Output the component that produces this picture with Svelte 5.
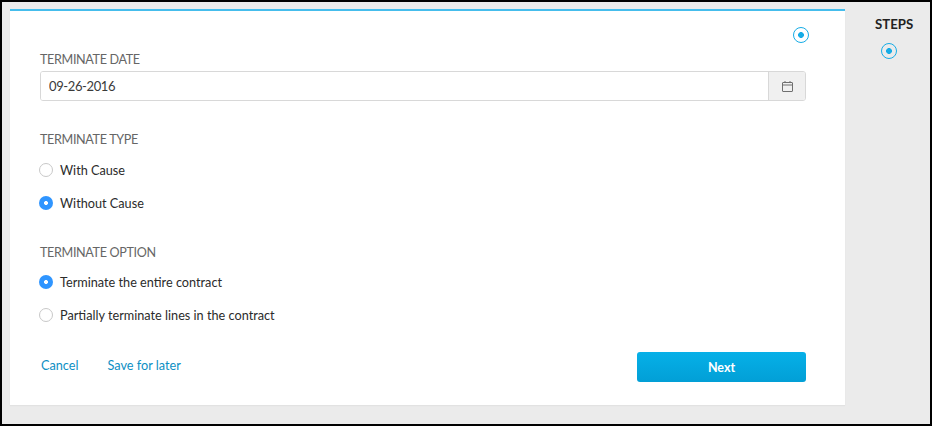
<script lang="ts">
	let terminateType = $state('without');
	let terminateOption = $state('entire');
</script>

<div class="frame">
	<main class="panel">
		<div class="current">
			<span class="step-dot"></span>
		</div>

		<label class="label first" for="date">TERMINATE DATE</label>
		<div class="date-field">
			<input id="date" value="09-26-2016" />
			<button class="cal" aria-label="Pick a date">
				<svg width="11" height="11" viewBox="0 0 11 11" fill="none" stroke="#6f6f6f" stroke-width="1">
					<rect x="0.5" y="1.5" width="10" height="9" rx="0.5" />
					<path d="M0.5 4h10M3 0v2M8 0v2" />
				</svg>
			</button>
		</div>

		<div class="label type-label">TERMINATE TYPE</div>
		<label class="radio">
			<input type="radio" bind:group={terminateType} value="with" />
			<span>With Cause</span>
		</label>
		<label class="radio">
			<input type="radio" bind:group={terminateType} value="without" />
			<span>Without Cause</span>
		</label>

		<div class="label option-label">TERMINATE OPTION</div>
		<label class="radio">
			<input type="radio" bind:group={terminateOption} value="entire" />
			<span>Terminate the entire contract</span>
		</label>
		<label class="radio">
			<input type="radio" bind:group={terminateOption} value="partial" />
			<span>Partially terminate lines in the contract</span>
		</label>

		<footer>
			<a href="#cancel">Cancel</a>
			<a href="#save">Save for later</a>
			<button class="next">Next</button>
		</footer>
	</main>

	<aside>
		<h2>STEPS</h2>
		<span class="step-dot"></span>
	</aside>
</div>

<style>
	:global(body) {
		margin: 0;
		font-family: Lato, "Open Sans", sans-serif;
		color: #2b2b2b;
	}
	.frame {
		box-sizing: border-box;
		width: 932px;
		height: 426px;
		border: 2px solid #000;
		background: #ebebeb;
		padding: 7px 0 0 8px;
		display: flex;
		overflow: hidden;
	}
	.panel {
		box-sizing: border-box;
		width: 835px;
		height: 396px;
		background: #fff;
		border-top: 2px solid #45bdec;
		padding: 0 39px 0 30px;
		box-shadow: 0 1px 1px #e2e2e2;
	}
	.current {
		display: flex;
		justify-content: flex-end;
		height: 0;
		padding-top: 16px;
		margin-right: -3px;
	}
	.step-dot {
		box-sizing: border-box;
		display: block;
		flex: none;
		width: 16px;
		height: 16px;
		border-radius: 50%;
		border: 1.6px solid #16ace6;
		background: radial-gradient(circle, #16ace6 0 2.6px, transparent 3.2px);
	}
	.label {
		display: block;
		font-size: 12.6px;
		letter-spacing: -0.35px;
		line-height: 16px;
		color: #666;
	}
	.first {
		margin-top: 25px;
	}
	.date-field {
		display: flex;
		margin-top: 3px;
		height: 30px;
		box-sizing: border-box;
		border: 1px solid #d8d8d8;
		border-radius: 3px;
		overflow: hidden;
	}
	.date-field input {
		flex: 1;
		border: 0;
		outline: 0;
		padding: 0 8px;
		font: inherit;
		font-size: 13px;
		letter-spacing: -0.38px;
		color: #3a3a3a;
		background: #fff;
	}
	.cal {
		width: 37px;
		padding: 0;
		border: 0;
		border-left: 1px solid #d8d8d8;
		background: #f0f0f0;
		display: flex;
		align-items: center;
		justify-content: center;
	}
	.type-label {
		margin-top: 31px;
		margin-bottom: 5px;
	}
	.option-label {
		margin-top: 26px;
		margin-bottom: 4px;
	}
	.radio {
		display: flex;
		align-items: center;
		gap: 7px;
		height: 33px;
		margin-left: -1px;
		font-size: 12.7px;
		color: #2b2b2b;
	}
	.radio input {
		appearance: none;
		box-sizing: border-box;
		flex: none;
		margin: 0;
		width: 14px;
		height: 14px;
		border-radius: 50%;
		border: 1px solid #c8c8c8;
		background: #fff;
	}
	.radio input:checked {
		border: 0;
		background: radial-gradient(circle, #fff 0 1.6px, #2f95ff 2.3px);
	}
	footer {
		display: flex;
		align-items: center;
		gap: 29px;
		margin-top: 21px;
		padding-left: 1px;
	}
	footer a {
		font-size: 12.7px;
		color: #0d8fc4;
		text-decoration: none;
		margin-bottom: 4px;
	}
	.next {
		margin-left: auto;
		width: 169px;
		height: 30px;
		border: 0;
		border-radius: 3px;
		background: linear-gradient(#06b0e8, #029fd6);
		color: #fff;
		font: inherit;
		font-size: 12.5px;
		font-weight: 700;
	}
	aside {
		flex: 1;
		display: flex;
		flex-direction: column;
		align-items: flex-start;
		padding-left: 30px;
	}
	h2 {
		margin: 7px 0 0;
		font-size: 13.2px;
		line-height: 16px;
		font-weight: 700;
		color: #222;
	}
	aside .step-dot {
		margin: 11px 0 0 6px;
	}
</style>
